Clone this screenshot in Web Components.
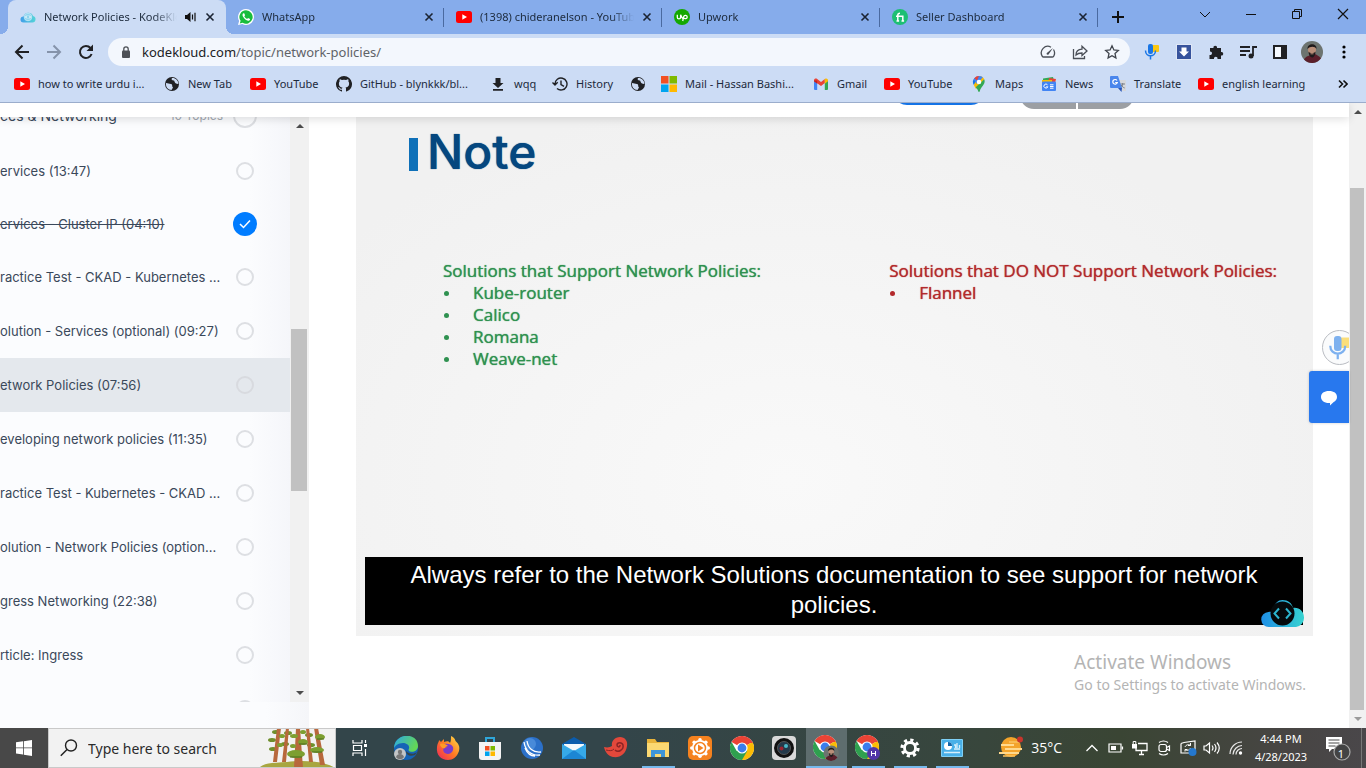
<!DOCTYPE html>
<html lang="en">
<head>
<meta charset="utf-8">
<title>Network Policies - KodeKloud</title>
<style>
html,body{height:100%;margin:0}
body{font-family:"Noto Sans","Open Sans",sans-serif;font-size:11px;color:#1c2a3c;overflow:hidden;background:#fff}
</style>
</head>
<body>
<desktop-screen></desktop-screen>
<script>
const YT='<rect y="2" width="16" height="12" rx="2.500" fill="#f00"/><path d="M6.300 5.300v5.400L11 8z" fill="#fff"/>';
const CHROME='<circle cx="12" cy="12" r="12" fill="#fff"/><path d="M12 12 1.600 6A12 12 0 0 1 22.400 6z" fill="#ea4335"/><path d="M12 12 22.400 6A12 12 0 0 1 12 24l-1-3z" fill="#fbbc05"/><path d="M12 12v0L6.700 15 1.600 6A12 12 0 0 0 12 24l5.200-9z" fill="#2fa04f"/><path d="M12 6.500h10.600" stroke="#ea4335" stroke-width="1"/><circle cx="12" cy="12" r="5.600" fill="#fff"/><circle cx="12" cy="12" r="4.400" fill="#3b7ded"/>';
const CLOUD='<defs><linearGradient id="g"><stop stop-color="#1f8fe6"/><stop offset="1" stop-color="#37d3d0"/></linearGradient></defs>';
const FACE='<circle cx="11" cy="11" r="11" fill="#6d7470"/><path d="M3 18.500C5 15 8 15 9 14l5-1c2 1 4 2 6 4.300A11 11 0 0 1 3 18.500z" fill="#5b1f2b"/><ellipse cx="11" cy="9" rx="4" ry="5.500" fill="#b98e78"/><path d="M6.500 8C6 2 16 1.500 15.500 8 14 5 9 5 6.500 8zM7.500 10.500c1.500 2 5.500 2 7 0 0 4-2 6-3.500 6s-3.500-3-3.500-6z" fill="#1e1a1b"/><path d="M9.500 12.800h3" stroke="#b98e78"/>';
const ICONS={
cloud:[16,16,CLOUD+'<path d="M3.500 13.500a3 3 0 0 1 0-6 5 5 0 0 1 9.500-.5 3.300 3.300 0 0 1-.5 6.500z" fill="url(#g)" opacity=".8"/><circle cx="8" cy="8" r="3.800" fill="#8fd4ee" stroke="#d5f1fa" stroke-width=".7"/><path d="m7 6.500-1.500 1.500L7 9.500m2-3L10.500 8 9 9.500" fill="none" stroke="#fff"/>'],
kk:[44,30,CLOUD+'<path d="M8 28a7.500 7.500 0 0 1-.5-15c2-.5 3 0 4 0C13 4 17 1 21.500 1 27 1 31 4 32 9c6-1 11 3.500 11 9.500A9 9 0 0 1 35 28z" fill="url(#g)"/><circle cx="21.500" cy="14.500" r="12" fill="#050a0c"/><path d="m18 9.500-4.500 5 4.500 5M25 9.500l4.500 5-4.500 5" fill="none" stroke="#2bb5cf" stroke-width="2"/>'],
whatsapp:[16,16,'<path d="M8 0a8 8 0 0 1 0 16 8 8 0 0 1-3.700-.9L0 16l1.100-4A8 8 0 0 1 8 0z" fill="#fff"/><path d="M8 1.300a6.700 6.700 0 1 1-3.400 12.500l-2.800.7.800-2.700A6.700 6.700 0 0 1 8 1.300z" fill="#19bd3c"/><path d="M5.500 4.200c-1.200.5-1.300 2-.4 3.600 1.300 2.300 3 3.600 5 4 1.200.1 2-.9 2-1.800L10 9l-.9 1C8 9.500 7 8.500 6.300 7.200l.8-.9-.9-2.100z" fill="#fff"/>'],
youtube:[16,16,YT],
upwork:[16,16,'<circle cx="8" cy="8" r="8" fill="#14a800"/><path d="M3.300 5.700v2.500c0 2.200 3.300 2.200 3.300 0V5.700c.8 2.200 1.700 3.500 2.700 4.300M8.700 12l1-4.300c.5-2 3.500-1.700 3.500.3 0 1.800-2.200 2.300-4 .7" fill="none" stroke="#fff" stroke-width="1.300"/>'],
fiverr:[16,16,'<circle cx="8" cy="8" r="8" fill="#1dbf73"/><path d="M4 7.200h6.800v4.800M5.800 12V6.200c0-1.300.7-2 2.200-2M4.500 12h2.600M9.500 12h2.600" fill="none" stroke="#fff" stroke-width="1.500"/>'],
close:[10,10,'<path d="m1.500 1.500 7 7m0-7-7 7" stroke="#1b2433" stroke-width="1.600"/>'],
audio:[12,12,'<path d="M0 4v4h2l3.500 3V1L2 4z" fill="#111"/><path d="M7.500 3.500v5M10 1.800v8.400" stroke="#111" stroke-width="1.200"/>'],
plus:[12,12,'<path d="M6 0v12M0 6h12" stroke="#111" stroke-width="2"/>'],
wdown:[12,12,'<path d="m1 4 5 5 5-5" fill="none" stroke="#111"/>'],
wmin:[12,12,'<path d="M1 6.500h10" stroke="#111"/>'],
wmax:[12,12,'<path d="M1.500 3.500h7v7h-7zM3.500 3.500v-2h7v7h-2" fill="none" stroke="#111"/>'],
wclose:[12,12,'<path d="m1 1 10 10m0-10L1 11" stroke="#111" stroke-width="1.200"/>'],
back:[16,16,'<path d="M15 8H2m6.500-6.500L2 8l6.500 6.500" fill="none" stroke="#202124" stroke-width="2"/>'],
fwd:[16,16,'<path d="M1 8h13M7.500 1.500 14 8l-6.500 6.500" fill="none" stroke="#8593aa" stroke-width="2"/>'],
reload:[16,16,'<path d="M13.600 10A6 6 0 1 1 12.500 4" fill="none" stroke="#202124" stroke-width="2"/><path d="M15 .500V7H8.500z" fill="#202124"/>'],
lock:[10,12,'<rect x="1" y="4.500" width="8" height="7.500" rx="1" fill="#4d5157"/><path d="M2.800 5V3a2.200 2.200 0 0 1 4.400 0v2" fill="none" stroke="#4d5157" stroke-width="1.300"/>'],
gauge:[16,16,'<path d="M12.500 13H3.500a1.500 1.500 0 0 1-1.200-.7A6.500 6.500 0 0 1 11 3.200M13.500 5.500a6.500 6.500 0 0 1 .3 6.500 1.500 1.500 0 0 1-1.300 1" fill="none" stroke="#4a4f57" stroke-width="1.300"/><path d="m6.800 9 6.200-5-4.500 6.500c-1.200.8-2.500-.3-1.700-1.500z" fill="#4a4f57"/>'],
share:[16,16,'<path d="M1.500 5v9.500h11V12" fill="none" stroke="#4a4f57" stroke-width="1.300"/><path d="M4 11c0-3.500 2-5.500 6-5.800V2.300L15 7l-5 4.500V9C7 9 5.500 9.500 4 11z" fill="none" stroke="#4a4f57" stroke-width="1.300"/>'],
star:[16,16,'<path d="m8 1.800 1.900 4.100 4.400.5-3.300 3 .9 4.500L8 11.700l-3.900 2.200.9-4.500-3.300-3 4.400-.5z" fill="none" stroke="#3f444c" stroke-width="1.300"/>'],
mic:[16,16,'<rect x="8" y="1" width="7" height="7" rx="1" fill="#fbc711"/><rect x="4" y="0" width="5" height="10" rx="2" fill="#1976e6"/><path d="M1.500 6.500c0 7 10 7 10 0M6.500 12v3.500" fill="none" stroke="#1976e6" stroke-width="1.500"/>'],
dl:[16,16,'<rect x=".5" y=".5" width="15" height="15" fill="#37539c" stroke="#dfe7f6"/><path d="M5.500 3.500h5v4h2.500l-5 5-5-5h2.500z" fill="#fff"/>'],
puzzle:[16,16,'<path d="M2 4h3.500C4.800 1 9.700 1 9 4h4v4c3-.8 3 4.300 0 3.500V15H9.500c.6-3-4-3-3.500 0H1.500v-4c3.500.5 3-3.800.5-3.500z" fill="#202124"/>'],
music:[18,16,'<path d="M1 3h10M1 7h10M1 11h6" stroke="#202124" stroke-width="1.800"/><path d="M14 12V3h4" fill="none" stroke="#202124" stroke-width="1.800"/><circle cx="12" cy="12" r="2.500" fill="#202124"/>'],
panel:[16,16,'<path d="M2 2h12v12H2z" fill="#f4f8fd" stroke="#202124" stroke-width="2"/><path d="M9 2h5v12H9z" fill="#202124"/>'],
face:[22,22,FACE],
dots:[4,14,'<circle cx="2" cy="2" r="1.600"/><circle cx="2" cy="7" r="1.600"/><circle cx="2" cy="12" r="1.600"/>'],
globe:[16,16,'<circle cx="8" cy="8" r="7" fill="#202124"/><path d="M2 7c2 0 3 1 5 1 2 .5.500 2 2 3.500L7.500 14c-3.500 0-6-3-5.500-7zM8 2c-1 1.500 0 2.500 1.500 2.500S10 6.500 12 7.500s2.500 0 2.500 0C14 4 11 1.500 8 2z" fill="#cddcf4"/>'],
github:[16,16,'<path d="M8 0a8 8 0 0 0-2.500 15.600c.4.1.5-.2.500-.4v-1.500c-2.200.5-2.700-1-2.700-1-.4-.9-.9-1.200-.9-1.200-.7-.5.100-.5.100-.5.800.1 1.200.8 1.200.8.700 1.300 1.900.9 2.300.7.100-.5.300-.9.500-1.100-1.800-.2-3.600-.9-3.600-4 0-.9.300-1.600.8-2.100-.1-.2-.4-1 .100-2.100 0 0 .7-.2 2.200.8a7.500 7.500 0 0 1 4 0c1.500-1 2.200-.8 2.200-.8.500 1.100.200 1.900.100 2.100.5.600.8 1.300.8 2.100 0 3.100-1.900 3.700-3.600 3.900.3.300.5.800.5 1.500v2.400c0 .200.100.500.500.4A8 8 0 0 0 8 0z" fill="#202124"/>'],
down:[16,16,'<path d="M5.500 2h5v5h3L8 12 2.500 7h3zM3 13h10v1.800H3z" fill="#202124"/>'],
history:[16,16,'<path d="M3 8a6 6 0 1 1 2 4.500M.500 6.500 3 9l2.700-2.700M9 4.500V8.500l3 1.800" fill="none" stroke="#202124" stroke-width="1.400"/>'],
ms:[16,16,'<path d="M0 0h7.500v7.500H0z" fill="#f25022"/><path d="M8.500 0H16v7.500H8.500z" fill="#7fba00"/><path d="M0 8.500h7.500V16H0z" fill="#00a4ef"/><path d="M8.500 8.500H16V16H8.500z" fill="#ffb900"/>'],
gmail:[16,16,'<path d="M1 5h3.200v9H2a1 1 0 0 1-1-1z" fill="#4285f4"/><path d="M11.800 5H15v8a1 1 0 0 1-1 1h-2.200z" fill="#34a853"/><path d="M1 4.500C1 2.500 3 2.200 4.200 3L8 6l3.800-3v4L8 10 1 5z" fill="#ea4335"/><path d="M11.800 3c1.500-1 3.200-.3 3.200 1.500v.8l-3.200 2.400z" fill="#fbbc04"/><path d="M1 5.200V4.500l3.200 0v3.200z" fill="#c5221f"/>'],
maps:[16,16,'<path d="M3.500 2a6 6 0 0 0-.7 7L8 3z" fill="#1a73e8"/><path d="M8 0a6 6 0 0 1 5.200 3.200L5 13 2.800 9z" fill="#fbbc04"/><path d="M13.200 3.200c2 4.800-3 7-4.400 12-.3 1-1.300 1-1.600 0C6.700 13.300 5.800 12.500 4.700 11.200z" fill="#34a853"/><path d="M8 0a6 6 0 0 1 3.800 1.300L6 8 2.800 3.500A6 6 0 0 1 8 0z" fill="#4285f4"/><path d="M8 0a6 6 0 0 0-4.700 2.200L6 4.500z" fill="#ea4335"/><circle cx="8" cy="6" r="2.300" fill="#fff"/>'],
news:[16,16,'<path d="M2 2.500 12 1l1 4H2z" fill="#34a853"/><path d="m8 2 7 1-1 4H7z" fill="#ea4335"/><path d="M1 4h10v4H1z" fill="#fbbc04"/><rect x="1" y="5.500" width="14" height="9.500" rx="1" fill="#4285f4"/><path d="M6.500 8.800a2 2 0 1 0 .3 2H5.200M9 8.800h3.500M9 10.500h3.500M9 12.200h3.500" fill="none" stroke="#fff"/>'],
translate:[16,16,'<path d="M7 4h8a1 1 0 0 1 1 1v10h-5z" fill="#d5d8dc"/><path d="M10.500 8H15M12.700 7v1c0 2-1 3-2 4m.500-3c.7 1.500 2 2.500 3.500 3" fill="none" stroke="#7a8088"/><path d="M1 0h7l4 12H1a1 1 0 0 1-1-1V1a1 1 0 0 1 1-1z" fill="#4a86ec"/><path d="m8 12 3.500 4 .5-4z" fill="#2a56b8"/><path d="M7 4.500A2.300 2.300 0 1 0 7.300 6.500H5.200" fill="none" stroke="#fff" stroke-width="1.200"/>'],
more:[10,10,'<path d="m1 1.500 3.500 3.500L1 8.500m4.500-7L9 5 5.500 8.500" fill="none" stroke="#111" stroke-width="1.600"/>'],
up:[8,6,'<path d="m0 5 4-4 4 4z" fill="#4c4c4c"/>'],
dn:[8,6,'<path d="m0 1 4 4 4-4z" fill="#4c4c4c"/>'],
dnsoft:[8,6,'<path d="m0 1 4 4 4-4z" fill="#9a9a9a"/>'],
bubble:[18,18,'<path d="M9 3c5 0 8 2.300 8 6 0 2.500-1.500 4-3.300 5L10 17.500V15C4 15.300 1 12.500 1 9c0-3.700 3-6 8-6z" fill="#fff"/>'],
windows:[16,16,'<path d="m0 2.300 7-1v6.200H0zM7.800 1.200 16 0v7.500H7.800zM0 8.300h7v6.200l-7-1zM7.800 8.300H16V16l-8.200-1.200z" fill="#fff"/>'],
search:[18,18,'<circle cx="11" cy="6.500" r="5.500" fill="none" stroke="#222" stroke-width="1.400"/><path d="M7 10.500.800 16.700" stroke="#222" stroke-width="1.500"/>'],
trees:[76,40,'<path d="M0 40c5-6 18-5 28-6 16-2 38-1 48 6z" fill="#a8a640"/><g fill="#6f8f2c"><ellipse cx="17" cy="4" rx="4" ry="2"/><ellipse cx="13" cy="12" rx="4" ry="2"/><ellipse cx="14" cy="21" rx="4" ry="2"/><ellipse cx="29" cy="5" rx="4" ry="2"/><ellipse cx="26" cy="16" rx="4" ry="2"/><ellipse cx="50" cy="7" rx="4" ry="2"/><ellipse cx="52" cy="17" rx="4" ry="2"/></g><g fill="#b8683c"><path d="m18 0-4 34h4l4-34zM27 0l-4 34h4l3-34zM37 0l-2 40h9L41 0zM47 0l3 34h4L50 0zM55 0l6 37h5L59 0z"/></g><g fill="#7d9f31"><ellipse cx="23" cy="8" rx="3" ry="2"/><ellipse cx="21" cy="17" rx="3" ry="2"/><ellipse cx="35" cy="8" rx="4" ry="2"/><ellipse cx="44" cy="4" rx="3" ry="2"/><ellipse cx="44" cy="14" rx="5" ry="3"/><ellipse cx="34" cy="18" rx="3" ry="2"/><ellipse cx="37" cy="26" rx="9" ry="4"/><ellipse cx="61" cy="9" rx="5" ry="3"/><ellipse cx="58" cy="22" rx="7" ry="3"/></g><g stroke="#4c6b1e" stroke-width="1"><path d="M31 29h12M58 11h7M53 24h10M40 16h8"/></g>'],
taskview:[16,16,'<path d="M1 0v3h9V0M1.500 5.500h8v5h-8zM1 16v-3h9v3M13.500 0v3M13.500 9v7" fill="none" stroke="#fff" stroke-width="1.200"/><path d="M12 4h3v3h-3z" fill="#fff"/>'],
edge:[24,24,'<defs><linearGradient id="e" x2="1" y2=".4"><stop stop-color="#2ba8e8"/><stop offset="1" stop-color="#63d657"/></linearGradient></defs><circle cx="12" cy="12" r="12" fill="#1563b6"/><path d="M0 12C1-4 24-4 24 10c0 5-5 6.500-8 5.500-2-.7-1.500-1.800-1-3C16 9 12 7 9 7c-5 0-8 3-9 5z" fill="url(#e)"/><path d="M23 16c-4 3-8 2-11-1 0 4 4 6 9 4" fill="#33454a"/><circle cx="6" cy="18" r="6" fill="#c3c6c8"/><circle cx="6" cy="16" r="2.200" fill="#777"/><path d="M2 21c1-4 7-4 8 0-2 3-6 3-8 0z" fill="#777"/>'],
firefox:[24,24,'<defs><linearGradient id="f" x1="1" x2="0" y2="1"><stop stop-color="#ffe14a"/><stop offset=".5" stop-color="#ff7b23"/><stop offset="1" stop-color="#ee2060"/></linearGradient></defs><path d="M15 0c3 1 4 3 4.500 5C23 8 24 11 23 15c-2 6-6 9-11 9C5 24 0 19 1 11c.5-4 2-5 2-7l2 2 3-3v3c3-1 5-1 6 1 1-2 1-4 1-7z" fill="url(#f)"/><path d="M6 9c3-2 9-2 11 2 1 4-2 7-5 7-4 0-6-4-4-6l3-1z" fill="#7a3ccb"/><path d="M4 8c3-1 6 0 8 2-2 0-3 1-3 2-2 1-5-1-5-4z" fill="#ff9b25"/>'],
store:[24,24,'<path d="M8 6V2h8v4" fill="none" stroke="#2fa6da" stroke-width="2"/><path d="M1 6h22v15a3 3 0 0 1-3 3H4a3 3 0 0 1-3-3z" fill="#f4f4f4"/><path d="M7 10h4.500v4.500H7z" fill="#f25022"/><path d="M12.500 10H17v4.500h-4.500z" fill="#7fba00"/><path d="M7 15.500h4.500V20H7z" fill="#00a4ef"/><path d="M12.500 15.500H17V20h-4.500z" fill="#ffb900"/>'],
sphere:[24,24,'<circle cx="12" cy="12" r="11" fill="#2b70c9"/><circle cx="10" cy="8" r="6" fill="#5b9be4" opacity=".6"/><path d="M4 6c1 8 7 14 16 13M7 5c1 7 6 12 14 11M5 12c2 5 6 8 10 8" fill="none" stroke="#fff" stroke-width="1.300"/>'],
mail:[26,24,'<path d="M1 8 13 1l12 7v4H1z" fill="#0b5cad"/><path d="M3 8h20v8H3z" fill="#f3f8fc"/><path d="m1 8 12 7 12-7v15H1z" fill="#36a9e8"/><path d="m1 23 12-9 12 9z" fill="#1c86d4"/>'],
shell:[24,24,'<path d="M0 11c4 1 6 0 8-1C7 5 11 1 16 1c5 0 8 4 7 9-1 8-7 12-14 11C4 20 1 16 0 11z" fill="#e3483b"/><path d="M11 14c3 3 9 0 8-5-1-3-6-3-6 0 0 2 3 3 3 0" fill="none" stroke="#8d2425" stroke-width="1.500"/><path d="M2 14c4 1 6 1 8-1" stroke="#8d2425" fill="none"/>'],
folder:[24,24,'<path d="M1 3h8l2 3h12v15H1z" fill="#e8b33a"/><path d="M1 7h22v14H1z" fill="#fbd872"/><path d="M5 21v-7h14v7h-4v-3H9v3z" fill="#3e95d9"/>'],
orange:[24,24,'<rect width="24" height="24" rx="5" fill="#f5821f"/><g fill="#fff"><circle cx="12" cy="12" r="8"/><circle cx="12" cy="3.800" r="1.800"/><circle cx="12" cy="20.200" r="1.800"/><circle cx="3.800" cy="12" r="1.800"/><circle cx="20.200" cy="12" r="1.800"/><circle cx="6.200" cy="6.200" r="1.800"/><circle cx="17.800" cy="6.200" r="1.800"/><circle cx="6.200" cy="17.800" r="1.800"/><circle cx="17.800" cy="17.800" r="1.800"/></g><circle cx="12" cy="12" r="5.500" fill="none" stroke="#f5821f" stroke-width="1.500"/><path d="m10 8.500 5.500 3.500-5.500 3.500z" fill="#f5821f"/>'],
chrome:[24,24,CHROME],
camera:[24,24,'<rect width="24" height="24" rx="4" fill="#d9d9d9"/><circle cx="12" cy="12" r="10" fill="#111"/><circle cx="12" cy="12" r="6.500" fill="#23394a" stroke="#555"/><circle cx="14" cy="10" r="2" fill="#4bb7c8"/><circle cx="9.500" cy="12.500" r="2" fill="#9b2330"/>'],
chromeface:[26,26,'<g>'+CHROME+'</g><g transform="translate(10.500 10.500) scale(.7)">'+FACE+'</g>'],
chromeh:[26,26,CHROME+'<circle cx="18.500" cy="18.500" r="6.500" fill="#5236a8"/><path d="M16.500 16v5m4-5v5m-4-2.500h4" stroke="#fff" stroke-width="1"/>'],
gear:[20,20,'<circle cx="10" cy="10" r="5.500" fill="none" stroke="#fff" stroke-width="2.800"/><circle cx="10" cy="10" r="8" fill="none" stroke="#fff" stroke-width="3.200" stroke-dasharray="3.140 3.140"/>'],
control:[22,18,'<rect width="22" height="18" rx="1" fill="#7fd0f5"/><rect x="1" y="1" width="20" height="16" fill="#49b0e8"/><circle cx="7" cy="7" r="4" fill="#fff"/><path d="M7 7V3a4 4 0 0 1 4 4z" fill="#1565a8"/><path d="M13 10h6M13 6h1.500v3M16 4v5M18.500 6v3M3 13.500h16" stroke="#d6effb" stroke-width="1.300" fill="none"/>'],
weather:[24,24,'<circle cx="12" cy="11" r="10" fill="#f3a42b"/><path d="M2 9h13M6 13h17M0 17h20" stroke="#ffd98d" stroke-width="2"/><path d="M10 6h10M4 20h12" stroke="#fbc25e" stroke-width="1.500"/><circle cx="21" cy="3.500" r="3" fill="#c8352c"/>'],
chev:[14,10,'<path d="m1.500 8 5.500-5.500L12.500 8" fill="none" stroke="#fff" stroke-width="1.300"/>'],
battery:[16,12,'<path d="M1 2h12v8H1zM14.500 4.500v3" fill="none" stroke="#fff" stroke-width="1.200"/><path d="M3 4h5v4H3z" fill="#fff"/>'],
monitor:[16,16,'<path d="M6 3.500h9v7H4V8M9.500 10.500v4M7 14.500h5" fill="none" stroke="#fff" stroke-width="1.300"/><path d="M0 4h5v4.500H0z" fill="#fff"/><path d="M1.200 4V1.500h2.600V4" fill="none" stroke="#fff"/>'],
meet:[16,16,'<rect x="3" y="4.500" width="7.500" height="7" rx="2" fill="none" stroke="#fff" stroke-width="1.200"/><path d="M10.500 7.500 13.500 6v4.500l-3-1.500M3 2.500c3-2 6-2 9 0M3 13.500c3 2 6 2 9 0" fill="none" stroke="#fff" stroke-width="1.200"/>'],
sync:[18,16,'<path d="M2 3.500 5 2.500M2 3.500V13h9M5 2.500 16 1v10" fill="none" stroke="#fff" stroke-width="1.200"/><path d="M6 7c1-2.500 4-3 5.500-1.500m0-2.500v2.500H9M11.500 8c-1 2.500-4 3-5.500 1.500m0 2V9.500h2.500" fill="none" stroke="#fff"/><circle cx="13.500" cy="12" r="4" fill="#2478cf"/>'],
sound:[18,14,'<path d="M1 5v4h2l3.500 3V2L3 5z" fill="none" stroke="#fff" stroke-width="1.200"/><path d="M9 4.500q2 2.500 0 5M11.500 3q3 4 0 8M14 1.500q4.500 5.500 0 11" fill="none" stroke="#fff" stroke-width="1.200"/>'],
wifi:[14,14,'<path d="M1 13A12 12 0 0 1 13 1M4 13.500A9.500 9.500 0 0 1 13 4.500M7 13.500a6 6 0 0 1 6-6" fill="none" stroke="#e8e8e8" stroke-width="1.200"/><circle cx="11.500" cy="12" r="1.700" fill="#fff"/>'],
note:[26,26,'<path d="M1 2h16v12H7l-3 3v-3H1z" fill="#fff"/><path d="M3.500 5h11M3.500 8h11M3.500 11h7" stroke="#4b4a4a" stroke-width="1.200"/><circle cx="17" cy="17" r="8" fill="#434344" stroke="#a9a9a9" stroke-width="1.200"/>'],
check:[12,10,'<path d="m1 5 3.500 3.500L11 1.500" fill="none" stroke="#fff" stroke-width="1.500"/>']
};
const define=(name,html,setup)=>{
  const t=document.createElement('template');t.innerHTML=html;
  customElements.define(name,class extends HTMLElement{
    constructor(){super();this.attachShadow({mode:'open'})}
    connectedCallback(){
      if(this.shadowRoot.firstChild)return;
      this.shadowRoot.append(t.content.cloneNode(true));
      if(setup)setup(this,this.shadowRoot);
    }
  });
};
// Swaps the <i> marker in a component's template for the icon its user names.
const placeIcon=(root,name)=>{
  const i=document.createElement('ui-icon');i.setAttribute('name',name);
  root.querySelector('i').replaceWith(i);
};

define('ui-icon','<style>:host{display:block;flex:none}svg{display:block}</style>',(el,root)=>{
  const [w,h,body]=ICONS[el.getAttribute('name')];
  const size=+el.getAttribute('size')||w;
  root.innerHTML+=`<svg aria-hidden="true" viewBox="0 0 ${w} ${h}" width="${size}" height="${Math.round(size*h/w)}">${body}</svg>`;
});

define('icon-button',`<style>
:host{display:flex;flex:none;width:32px;justify-content:center}
button{display:flex;align-items:center;justify-content:center;width:100%;padding:0;border:0;background:none;color:inherit;font:inherit}
</style><button><slot></slot></button>`,(el,root)=>root.querySelector('button').setAttribute('aria-label',el.getAttribute('label')));

define('browser-tab',`<style>
:host{position:relative;display:flex;align-items:center;flex:0 1 218px;min-width:0;box-sizing:border-box;padding:0 10px 0 12px;gap:8px}
:host::after{content:"";position:absolute;right:0;top:8px;height:19px;width:1px;background:#4a6aa0}
:host([active]){background:#ccdcf5;border-radius:8px 8px 0 0;padding-right:11px}
:host([active])::after{top:auto;bottom:0;right:-8px;width:8px;height:8px;background:radial-gradient(circle at 100% 0,#86aceb 8px,#ccdcf5 8px)}
:host([active])::before{content:"";position:absolute;left:-8px;bottom:0;width:8px;height:8px;background:radial-gradient(circle at 0 0,#86aceb 8px,#ccdcf5 8px)}
.t{flex:1;overflow:hidden;white-space:nowrap;line-height:20px;-webkit-mask-image:linear-gradient(90deg,#000 calc(100% - 24px),transparent);mask-image:linear-gradient(90deg,#000 calc(100% - 24px),transparent)}
icon-button{width:10px}
</style><i></i><span class="t"><slot></slot></span><ui-icon class="a" name="audio"></ui-icon><icon-button label="Close tab"><ui-icon name="close"></ui-icon></icon-button>`,
(el,root)=>{
  placeIcon(root,el.getAttribute('icon'));
  if(!el.hasAttribute('active'))root.querySelector('.a').remove();
});

define('tab-strip',`<style>
:host{display:flex;height:34px;background:#86aceb;padding-left:8px}
.new{width:40px}
.win{display:flex;margin-left:auto}
.win icon-button{width:46px;padding-bottom:6px}
</style>
<browser-tab icon="cloud" active>Network Policies - KodeKloud</browser-tab>
<browser-tab icon="whatsapp">WhatsApp</browser-tab>
<browser-tab icon="youtube">(1398) chideranelson - YouTube</browser-tab>
<browser-tab icon="upwork">Upwork</browser-tab>
<browser-tab icon="fiverr">Seller Dashboard</browser-tab>
<icon-button class="new" label="New tab"><ui-icon name="plus"></ui-icon></icon-button>
<div class="win">
<icon-button label="Search tabs"><ui-icon name="wdown"></ui-icon></icon-button>
<icon-button label="Minimize"><ui-icon name="wmin"></ui-icon></icon-button>
<icon-button label="Restore"><ui-icon name="wmax"></ui-icon></icon-button>
<icon-button label="Close"><ui-icon name="wclose"></ui-icon></icon-button>
</div>`);

define('address-bar',`<style>
:host{display:flex;background:#ccdcf5;padding:4px 6px 0}
form{flex:1;display:flex;align-items:center;height:28px;margin:0 6px;padding:0 2px 0 13px;border-radius:14px;background:#f3f7fd}
.url{position:relative;display:grid;flex:1;margin-left:11px;font-size:13px;line-height:20px;color:#5f6368}
input{grid-area:1/1;padding:0;border:0;background:none;font:inherit;color:transparent;outline:0;min-width:0}
.show{grid-area:1/1;white-space:nowrap}
b{font-weight:400;color:#202124}
</style>
<icon-button label="Back"><ui-icon name="back"></ui-icon></icon-button>
<icon-button label="Forward"><ui-icon name="fwd"></ui-icon></icon-button>
<icon-button label="Reload"><ui-icon name="reload"></ui-icon></icon-button>
<form><ui-icon name="lock"></ui-icon>
<span class="url"><input type="text" aria-label="Address"><span class="show"><b>kodekloud.com</b>/topic/network-policies/</span></span>
<icon-button label="Performance"><ui-icon name="gauge"></ui-icon></icon-button>
<icon-button label="Share"><ui-icon name="share"></ui-icon></icon-button>
<icon-button label="Bookmark"><ui-icon name="star"></ui-icon></icon-button></form>
<icon-button label="Voice typing"><ui-icon name="mic"></ui-icon></icon-button>
<icon-button label="Download"><ui-icon name="dl"></ui-icon></icon-button>
<icon-button label="Extensions"><ui-icon name="puzzle"></ui-icon></icon-button>
<icon-button label="Media"><ui-icon name="music"></ui-icon></icon-button>
<icon-button label="Side panel"><ui-icon name="panel"></ui-icon></icon-button>
<icon-button label="Profile"><ui-icon name="face"></ui-icon></icon-button>
<icon-button label="Menu"><ui-icon name="dots"></ui-icon></icon-button>`);

define('bookmark-link',`<style>
:host{display:block;min-width:0}
a{display:flex;align-items:center;gap:8px;color:#1c2a3c;text-decoration:none;white-space:nowrap;line-height:16px}
</style><a href="#"><i></i><slot></slot></a>`,(el,root)=>placeIcon(root,el.getAttribute('icon')));

define('bookmark-bar',`<style>
:host{display:grid;grid-template-columns:150px 86px 86px 154px 62px 78px 31px 152px 71px 87px 70px 69px 88px 1fr 32px;align-items:center;height:36px;padding:0 7px 0 14px;background:#ccdcf5;border-bottom:1px solid #9badcc}
</style>
<bookmark-link icon="youtube">how to write urdu i...</bookmark-link>
<bookmark-link icon="globe">New Tab</bookmark-link>
<bookmark-link icon="youtube">YouTube</bookmark-link>
<bookmark-link icon="github">GitHub - blynkkk/bl...</bookmark-link>
<bookmark-link icon="down">wqq</bookmark-link>
<bookmark-link icon="history">History</bookmark-link>
<bookmark-link icon="globe"></bookmark-link>
<bookmark-link icon="ms">Mail - Hassan Bashi...</bookmark-link>
<bookmark-link icon="gmail">Gmail</bookmark-link>
<bookmark-link icon="youtube">YouTube</bookmark-link>
<bookmark-link icon="maps">Maps</bookmark-link>
<bookmark-link icon="news">News</bookmark-link>
<bookmark-link icon="translate">Translate</bookmark-link>
<bookmark-link icon="youtube">english learning</bookmark-link>
<icon-button label="More bookmarks"><ui-icon name="more"></ui-icon></icon-button>`);

define('lesson-row',`<style>
:host{display:flex;align-items:center;height:54px;padding-right:36px;font-family:Inter,sans-serif;font-size:13px;line-height:20px;color:#3a485a}
a{flex:1;min-width:0;white-space:nowrap;color:inherit;text-decoration:none}
.box{position:relative;display:flex;justify-content:center;align-items:center;width:18px;height:18px}
input{appearance:none;flex:none;margin:0;width:18px;height:18px;box-sizing:border-box;border:2px solid #dddfe3;border-radius:50%}
ui-icon{display:none}
:host([current]){background:#e4e8ed}
:host([current]) input{border-color:#d8dadf}
:host([done]){height:52px}
:host([done]) a{text-decoration:line-through}
:host([done]) input{width:24px;height:24px;border:0;background:#007cff}
:host([done]) ui-icon{display:block;position:absolute}
:host([section]){height:56px;font-size:14px;padding-right:33px}
:host([section]) .box,:host([section]) input{width:24px;height:24px}
.n{font-size:12px;color:#a3a9b1;margin-right:10px}
</style><a href="#"><slot></slot></a><span class="n"></span><span class="box"><input type="checkbox"><ui-icon name="check"></ui-icon></span>`,(el,root)=>{
  const c=root.querySelector('input');c.checked=el.hasAttribute('done');c.setAttribute('aria-label','Completed: '+el.textContent);
  const n=root.querySelector('.n');
  el.hasAttribute('section')?n.textContent=el.getAttribute('section'):n.remove();
});

define('scroll-track',`<style>
:host{display:flex;flex-direction:column;align-items:center;justify-content:space-between;width:17px;box-sizing:border-box;background:#f1f1f1;padding:6px 0}
.lane{flex:1;align-self:stretch;display:flex;flex-direction:column;padding:0 2px 0 1px}
.before{flex:var(--before)}.thumb{flex:var(--thumb);background:#c1c1c1}.after{flex:var(--after)}
</style><ui-icon name="up"></ui-icon><div class="lane"><div class="before"></div><div class="thumb"></div><div class="after"></div></div><i></i>`,(el,root)=>placeIcon(root,el.hasAttribute('soft')?'dnsoft':'dn'));

define('course-sidebar',`<style>
:host{display:block;width:309px;box-sizing:border-box;padding-bottom:26px;background:linear-gradient(90deg,#fbfcfe 86%,#f5f6f9)}
.in{display:flex;height:100%}
nav{flex:1;overflow:hidden;min-width:0;background:linear-gradient(90deg,#fbfcfe 86%,#f5f6fa)}
.list{margin-top:-29px}
scroll-track{width:19px;--before:200;--thumb:162;--after:199}
</style><div class="in"><nav aria-label="Lessons"><div class="list">
<lesson-row section="10 Topics">ces &amp; Networking</lesson-row>
<lesson-row>ervices (13:47)</lesson-row>
<lesson-row done>ervices - Cluster IP (04:10)</lesson-row>
<lesson-row>ractice Test - CKAD - Kubernetes ...</lesson-row>
<lesson-row>olution - Services (optional) (09:27)</lesson-row>
<lesson-row current>etwork Policies (07:56)</lesson-row>
<lesson-row>eveloping network policies (11:35)</lesson-row>
<lesson-row>ractice Test - Kubernetes - CKAD ...</lesson-row>
<lesson-row>olution - Network Policies (option...</lesson-row>
<lesson-row>gress Networking (22:38)</lesson-row>
<lesson-row>rticle: Ingress</lesson-row>
<lesson-row></lesson-row>
</div></nav><scroll-track></scroll-track></div>`);

define('video-slide',`<style>
:host{position:relative;display:block;height:519px;box-sizing:border-box;padding:11px 36px 0 53px;background:radial-gradient(ellipse at 45% 70%,#f9f9f9,#f1f1f1 75%)}
h1{display:flex;align-items:center;gap:9px;margin:0;font:500 48px/48px Inter,sans-serif;color:#05477f;text-shadow:0 0 1px #05477f}
h1::before{content:"";width:9px;height:33px;margin-top:4px;background:#0f70b8}
.cols{display:flex;justify-content:space-between;margin-top:84px;padding-left:34px;font-family:"Open Sans",sans-serif;font-size:17px;line-height:22px;text-shadow:0 0 1px currentColor}
p{margin:0}
ul{margin:0;padding:0;list-style:none}
li{display:flex;align-items:center}
li::before{content:"";width:5px;height:5px;margin:0 24px 0 1px;border-radius:50%;background:currentColor}
.ok{color:#2f9150}.no{color:#b32a2c}
.cap{position:absolute;left:9px;right:10px;bottom:11px;background:#000;color:#fff;text-align:center;font:24px/30px "Liberation Sans",sans-serif;padding:3px 30px 5px}
.logo{position:absolute;right:8px;bottom:7px}
</style><h1>Note</h1>
<div class="cols"><div class="ok"><p>Solutions that Support Network Policies:</p><ul><li>Kube-router</li><li>Calico</li><li>Romana</li><li>Weave-net</li></ul></div>
<div class="no"><p>Solutions that DO NOT Support Network Policies:</p><ul><li>Flannel</li></ul></div></div>
<div class="cap">Always refer to the Network Solutions documentation to see support for network policies.</div>
<ui-icon class="logo" name="kk"></ui-icon>`);

define('course-page',`<style>
:host{position:relative;display:grid;grid-template:14px 1fr/309px 1fr 17px;min-height:0;overflow:hidden;background:#fff}
header{grid-area:1/1/2/3;position:relative;z-index:1;display:flex;justify-content:flex-end;align-items:flex-start;padding-right:215px;background:#fff;box-shadow:0 2px 10px #0002}
header button{height:28px;margin:-22px 0 0;border:0;background:#9c9fa3;width:57px}
header .b{width:92px;height:28px;margin:-26px 35px 0 0;border-radius:14px;background:#1473e6}
header .l{border-radius:14px 0 0 14px;border-right:1px solid #fff}
header .r{border-radius:0 14px 14px 0;border-left:1px solid #fff}
course-sidebar{grid-area:2/1;min-height:0}
main{grid-area:2/2;padding:0 36px 0 47px;min-width:0}
.bar{grid-area:1/3/3/4;--before:73;--thumb:522;--after:6}
.voice,.chat{position:absolute;display:flex;align-items:center;justify-content:center;padding:0}
.voice{right:9px;top:227px;width:35px;height:35px;border-radius:50%;border:1px solid #b9bcc2;background:#fafbfc;clip-path:inset(0 8px 0 0)}
.voice ui-icon{opacity:.55}
.chat{right:17px;top:268px;width:40px;height:52px;border:0;border-radius:3px 0 0 3px;background:#2878ee;box-shadow:0 0 3px #0003}
.mark{position:absolute;right:60px;bottom:33px;color:#b4b4b4;font-size:14px;line-height:20px}
.mark p{margin:0}.mark .h{font-size:19px;line-height:26px}
</style>
<header><button class="b" aria-label="Complete"></button><button class="l" aria-label="Previous"></button><button class="r" aria-label="Next"></button></header>
<course-sidebar></course-sidebar>
<main><video-slide></video-slide></main>
<button class="voice" aria-label="Voice"><ui-icon name="mic" size="24"></ui-icon></button>
<button class="chat" aria-label="Chat"><ui-icon name="bubble"></ui-icon></button>
<div class="mark"><p class="h">Activate Windows</p><p>Go to Settings to activate Windows.</p></div>
<scroll-track class="bar" soft></scroll-track>`);

define('task-button',`<style>
:host{display:flex;width:42px;height:40px;flex:none;justify-content:center}
button{display:flex;align-items:center;justify-content:center;width:100%;padding:0;border:0;background:none}
:host([open]) button{width:33px;border-bottom:2px solid #76b9ed;padding-top:2px}
:host([front]) button{width:41px;border-bottom:2px solid #76b9ed;padding-top:2px;background:#5e6d6e}
</style><button><i></i></button>`,(el,root)=>{
  const n=el.getAttribute('icon');placeIcon(root,n);
  root.querySelector('button').setAttribute('aria-label',n);
});

define('task-bar',`<style>
:host{display:flex;height:40px;color:#fff;background:linear-gradient(90deg,#484848 48px,#33454a 336px,#33454a 45%,#38463c 72%,#3a4534 82%,#474543 94%,#4a474a)}
.start{width:48px}
label{display:flex;align-items:center;width:288px;box-sizing:border-box;border:1px solid #c9c9c9;background:#f2f2f2;padding-left:11px;color:#222;overflow:hidden}
input{flex:1;min-width:0;padding:0;margin-left:10px;border:0;background:none;font:inherit;font-size:14px;color:#222;outline:0}
input::placeholder{color:#2b2b2b;opacity:1}
.tv{width:48px;margin-right:1px}
.right{display:flex;margin-left:auto}
.w{display:flex;align-items:center;gap:8px;padding:0 18px 0 0;border:0;background:none;color:inherit;font:14px/20px "Open Sans",sans-serif}
.right icon-button{width:24px}
.clock{display:flex;flex-direction:column;justify-content:center;width:66px;text-align:center;line-height:18px}
.right .n{position:relative;width:47px;border-right:1px solid #777;margin-right:4px}
.badge{position:absolute;left:22px;top:18px;width:10px;text-align:center;line-height:16px}
</style>
<task-button class="start" icon="windows"></task-button>
<label><ui-icon name="search"></ui-icon><input type="search" placeholder="Type here to search" aria-label="Search"><ui-icon name="trees"></ui-icon></label>
<task-button class="tv" icon="taskview"></task-button>
<task-button icon="edge"></task-button>
<task-button icon="firefox"></task-button>
<task-button icon="store"></task-button>
<task-button icon="sphere"></task-button>
<task-button icon="mail"></task-button>
<task-button icon="shell"></task-button>
<task-button icon="folder" open></task-button>
<task-button icon="orange"></task-button>
<task-button icon="chrome"></task-button>
<task-button icon="camera"></task-button>
<task-button icon="chromeface" front></task-button>
<task-button icon="chromeh" open></task-button>
<task-button icon="gear" open></task-button>
<task-button icon="control" open></task-button>
<div class="right"><button class="w"><ui-icon name="weather"></ui-icon>35°C</button>
<icon-button label="Hidden icons"><ui-icon name="chev"></ui-icon></icon-button>
<icon-button label="Battery"><ui-icon name="battery"></ui-icon></icon-button>
<icon-button label="Network"><ui-icon name="monitor"></ui-icon></icon-button>
<icon-button label="Meet now"><ui-icon name="meet"></ui-icon></icon-button>
<icon-button label="Sync"><ui-icon name="sync"></ui-icon></icon-button>
<icon-button label="Volume"><ui-icon name="sound"></ui-icon></icon-button>
<icon-button label="Wi-Fi"><ui-icon name="wifi"></ui-icon></icon-button>
<div class="clock"><span>4:44 PM</span><span>4/28/2023</span></div>
<icon-button class="n" label="Notifications"><ui-icon name="note"></ui-icon><span class="badge">1</span></icon-button></div>`);

define('desktop-screen',`<style>
:host{display:grid;grid-template-rows:auto 1fr auto;height:100vh}
</style><div><tab-strip></tab-strip><address-bar></address-bar><bookmark-bar></bookmark-bar></div><course-page></course-page><task-bar></task-bar>`);
</script>
</body>
</html>
